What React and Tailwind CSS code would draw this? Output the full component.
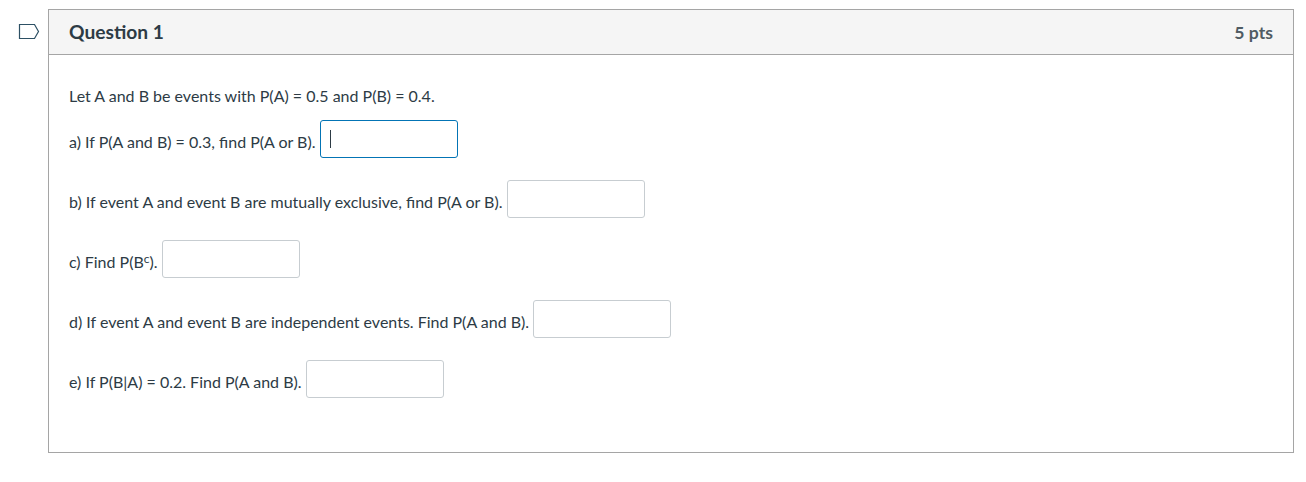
import React from "react";

const rows = [
  { label: "a) If P(A and B) = 0.3, find P(A or B).", focused: true },
  { label: "b) If event A and event B are mutually exclusive, find P(A or B)." },
  { label: <>c) Find P(B<sup className="top-[-5px] text-[12px] leading-none">c</sup>).</> },
  { label: "d) If event A and event B are independent events. Find P(A and B)." },
  { label: "e) If P(B|A) = 0.2. Find P(A and B)." },
];

const AnswerBox = ({ focused }) => (
  <div
    className={`ml-[4.2px] h-[38px] w-[138px] rounded-[3px] border bg-white flex items-center pl-[9px] ${
      focused ? "border-[#0374b5]" : "border-[#c7cdd1]"
    }`}
  >
    {focused && <span className="block h-[18px] w-px bg-[#2d3b45]" />}
  </div>
);

const App = () => {
  return (
    <div
      className="flex h-[482px] w-[1306px] items-start bg-white pt-[9px] pl-[18px] text-[#2d3b45]"
      style={{ fontFamily: "Lato, sans-serif" }}
    >
      <div className="w-[30px] pt-[14px]">
        <svg width="22" height="17" viewBox="0 0 22 17" fill="none">
          <path d="M1.5 1.5H16.5L20.5 8.5L16.5 15.5H1.5Z" stroke="#2d5064" strokeWidth="1.2" />
        </svg>
      </div>
      <div className="h-[444px] w-[1246px] border border-[#a5a5a5]">
        <div className="flex h-[45px] items-center justify-between border-b border-[#a5a5a5] bg-[#f5f5f5] pl-[20px] pr-[20px]">
          <span className="text-[19.2px] font-bold">Question 1</span>
          <span className="relative top-px text-[17.6px] font-bold text-[#4f5b63]">5 pts</span>
        </div>
        <div className="pl-[20px] pt-[31px] text-[16px]">
          <p className="h-[19px] leading-[19px]">Let A and B be events with P(A) = 0.5 and P(B) = 0.4.</p>
          <div className="mt-[15px] flex flex-col gap-[22px]">
            {rows.map((row, i) => (
              <div key={i} className="flex items-center">
                <span className="relative top-[3px]">{row.label}</span>
                <AnswerBox focused={row.focused} />
              </div>
            ))}
          </div>
        </div>
      </div>
    </div>
  );
};

export default App;
